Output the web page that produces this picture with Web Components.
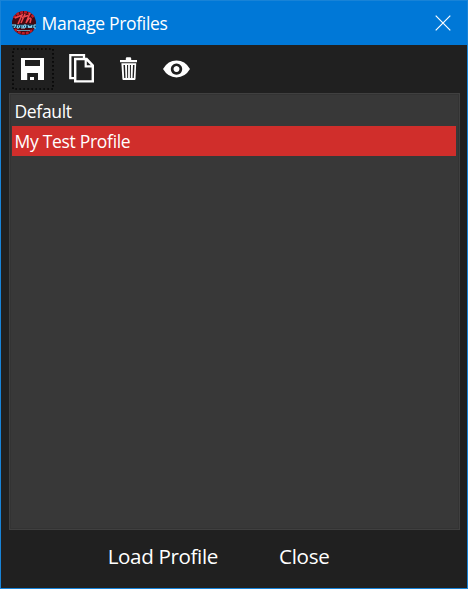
<!DOCTYPE html>
<html lang="en">
<head>
<meta charset="utf-8">
<title>Manage Profiles</title>
<style>
html,body{margin:0;height:100%;overflow:hidden}
body{font-family:"Open Sans","Noto Sans",sans-serif;color:#fff}
</style>
</head>
<body>
<profile-window>
  <title-bar slot="title">Manage Profiles</title-bar>
  <tool-bar slot="tools">
    <tool-button kind="save" focused></tool-button>
    <tool-button kind="copy"></tool-button>
    <tool-button kind="trash"></tool-button>
    <tool-button kind="eye"></tool-button>
  </tool-bar>
  <profile-list>
    <profile-item style="letter-spacing:-.33px">Default</profile-item>
    <profile-item selected style="letter-spacing:-.3px">My Test Profile</profile-item>
  </profile-list>
  <flat-button slot="actions" style="letter-spacing:-.36px">Load Profile</flat-button>
  <flat-button slot="actions" style="letter-spacing:-.3px">Close</flat-button>
</profile-window>
<script>
const define = (name, html, setup) => {
  const tpl = document.createElement('template');
  tpl.innerHTML = html;
  customElements.define(name, class extends HTMLElement {
    constructor() {
      super();
      this.attachShadow({ mode: 'open' }).append(tpl.content.cloneNode(true));
      if (setup) setup(this);
    }
  });
};

define('profile-window', `
<style>
:host{display:flex;flex-direction:column;box-sizing:border-box;width:468px;height:589px;border:1px solid #1883d7;background:#202020}
main{flex:1;display:flex;min-height:0;padding:0 7px 0 8px}
footer{height:58px;display:flex;gap:61px;padding-left:106.7px;box-sizing:border-box}
</style>
<slot name="title"></slot><slot name="tools"></slot><main><slot></slot></main><footer><slot name="actions"></slot></footer>`);

define('title-bar', `
<style>
:host{display:flex;align-items:center;height:44px;background:#0078d7;font-size:17.5px;letter-spacing:-.33px;padding:0 16.5px 0 10px}
.logo{width:26px;height:26px;margin-right:4.6px}
span{flex:1;line-height:24px;white-space:nowrap}
.close{width:16px;height:16px;margin-top:-1px}
</style>
<svg class="logo" viewBox="0 0 26 26">
<circle cx="13" cy="13" r="12" fill="#420a12"/>
<path d="M3 8a11.5 11.5 0 0 1 20 0M4 19a11.5 11.5 0 0 0 18 0" fill="none" stroke="#c01a26" stroke-width="2.5" stroke-dasharray="3 1"/>
<path d="M4 8l7-3-4 9M14 4l-4 9M11 7.5l6-2M19 3l-4 10q4-7 5-4l-1 4" fill="none" stroke="#f0484e" stroke-width="1.5"/>
<path d="M1 14.5h24v3.5H2z" fill="#124866"/>
<path d="M1 15h4l-2 3M7 15l-1 3h2l1-3M11 15v4M13 15h2l-1 3h-2zM17 15l1 3 1-2 1 2 1-3M25 15h-2v3h2" fill="none" stroke="#8ad8f6" stroke-width="1"/>
<path d="M6 20.5h13" stroke="#6fb8d6" stroke-width=".8"/>
</svg><span><slot></slot></span>
<svg class="close" viewBox="0 0 16 16"><path d="M.7.7l14.6 14.6M15.3.7L.7 15.3" stroke="#fff" stroke-width="1.2"/></svg>`);

define('tool-bar', `
<style>:host{display:flex;height:48px;padding:3px 0 0 11px;box-sizing:border-box;gap:6px}</style><slot></slot>`);

const icons = {
  save: '<path fill-rule="evenodd" d="M9 10H32V32H9zM13 12V18H28V12zM15.2 25V32H26V25zM18 29h4v3h-4z"/>',
  copy: '<path d="M24 10V7.2H10.3V30.2H14.5" fill="none" stroke="#fff" stroke-width="2.3"/><path fill-rule="evenodd" d="M14 9.8H27.2L34 17V34.6H14zM16.4 12.2V32.2H31.6V19.5H24.6V12.2zM26.8 13.2V17.3H30.8z"/>',
  trash: '<path fill-rule="evenodd" d="M12 12h5.8v-1.5q0-1.2 1.2-1.2h3q1.2 0 1.2 1.2V12H29v2.2H12zM13.4 15.2H28.2L27.5 31q-.1 1-1 1H15.4q-1 0-1-1zM15.5 17L16.2 30h1.3L17 17zM19 17l.2 13h.9V17zM21.9 17v13h.9L23 17zM25 17l-.5 13h1.3L26.5 17z"/>',
  eye: '<path fill-rule="evenodd" d="M7 21Q12 12.6 20.5 12.6T34 21Q29 29.4 20.5 29.4T7 21zM20.5 15.4a5.7 5.7 0 1 0 .01 0zM20.5 18.1a3 3 0 1 1-.01 0z"/>'
};
define('tool-button', `
<style>
:host{display:block;width:42px;height:42px}
svg{display:block;overflow:visible}
.focus{display:none}
:host([focused]) .focus{display:inline}
</style>
<svg width="42" height="42" fill="#fff"><rect class="focus" x="1" y="1" width="40" height="40" fill="none" stroke="#060606" stroke-width="1.6" stroke-dasharray="1.7 2.3"/><g></g></svg>`,
el => { el.shadowRoot.querySelector('g').innerHTML = icons[el.getAttribute('kind')]; });

define('profile-list', `
<style>:host{display:block;flex:1;box-sizing:border-box;background:#383838;border:1px solid #404040;padding:2px 3px 2px 2px;box-shadow:inset 0 0 0 1px #333}</style><slot></slot>`);

define('profile-item', `
<style>
:host{display:block;height:30px;line-height:30px;font-size:17.5px;padding-left:2.5px;white-space:nowrap}
:host([selected]){background:#d02e2b}
</style><slot></slot>`);

define('flat-button', `
<style>:host{display:block;font-size:20.6px;line-height:52px;white-space:nowrap}</style><slot></slot>`);
</script>
</body>
</html>
